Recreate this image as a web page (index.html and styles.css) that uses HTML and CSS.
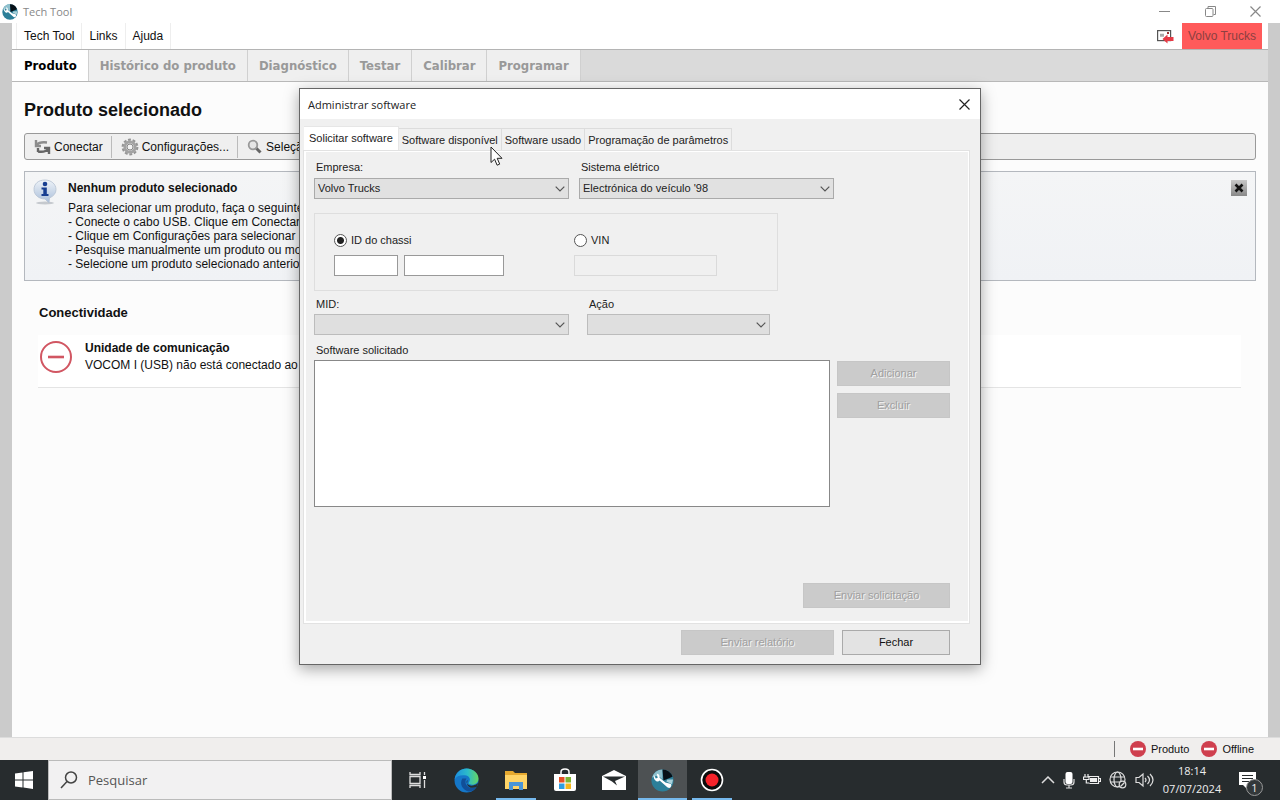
FILE: index.html
```html
<!DOCTYPE html>
<html lang="pt-BR">
<head>
<meta charset="utf-8">
<title>Tech Tool</title>
<link rel="stylesheet" href="styles.css">
</head>
<body>
<svg class="defs" aria-hidden="true">
  <symbol id="logo" viewBox="0 0 24 24">
    <circle cx="12" cy="12" r="11.5" fill="#2c7f99"/>
    <path d="M1 9A11.5 11.5 0 0 1 12 .5V11Q7 5 1 9Z" fill="#8fc0cd"/>
    <path d="M12 .5A11.5 11.5 0 0 1 22.5 8L13 12Z" fill="#071018"/>
    <path d="M3 6Q2 11 6 13q2 .5 3-1l8 7q3 2 4-1t-2-3l-4-1-6-5q0-4-3-4l1 4-2 1Z" fill="#fff"/>
    <path d="M17 11l6 0-1 5-6-3Z" fill="#a9d0d9"/>
  </symbol>
  <symbol id="chev" viewBox="0 0 10 6"><path d="M.7.7 5 5 9.3.7" fill="none" stroke="#555" stroke-width="1.2"/></symbol>
  <symbol id="cross" viewBox="0 0 11 11"><path d="M.5.5l10 10M10.500.500l-10 10" fill="none" stroke="currentColor" stroke-width="1.2"/></symbol>
  <symbol id="stop" viewBox="0 0 16 16"><circle cx="8" cy="8" r="8" fill="#cf3f4e"/><path d="M3 8h10" stroke="#fff" stroke-width="2.600"/></symbol>
</svg>

<header class="titlebar">
  <svg class="titlebar-logo"><use href="#logo"/></svg>
  <span class="titlebar-name">Tech Tool</span>
  <button class="win-btn" aria-label="Minimizar"><svg width="11" height="11"><path d="M0 5.500h11" stroke="#888"/></svg></button>
  <button class="win-btn" aria-label="Restaurar"><svg width="11" height="11" fill="none" stroke="#888"><rect x=".5" y="2.500" width="7.500" height="8" rx="1"/><path d="M3 2V.5h7.500v8H8.500"/></svg></button>
  <button class="win-btn" aria-label="Fechar janela"><svg width="11" height="11"><use href="#cross"/></svg></button>
</header>

<main class="app">
  <nav class="menu">
    <a href="#">Tech Tool</a><a href="#">Links</a><a href="#">Ajuda</a>
    <svg class="menu-mail" width="17" height="15" viewBox="0 0 17 15"><rect x=".6" y="1.600" width="13" height="10" fill="#fff" stroke="#555" stroke-width="1.200"/><path d="M3 5.500h4M3 7h4" stroke="#aaa" stroke-width="1.500"/><path d="M10 3h2v2h-2z" fill="#933"/><path d="M5.500 10 10.500 5.500v2.500h6v4h-6v2.500Z" fill="#e63a45"/></svg>
    <span class="brand">Volvo Trucks</span>
  </nav>
  <nav class="tabs">
    <a class="tab tab-on" href="#">Produto</a><a class="tab" href="#">Histórico do produto</a><a class="tab" href="#">Diagnóstico</a><a class="tab" href="#">Testar</a><a class="tab" href="#">Calibrar</a><a class="tab" href="#">Programar</a>
  </nav>
  <section class="content">
    <h1>Produto selecionado</h1>
    <div class="toolbar">
      <button><svg width="17" height="16" viewBox="0 0 17 16" fill="none" stroke-width="2.400"><path d="M2 1v6h5M2.500 6C5 3 9 3 13 3.500" stroke="#8c8c8c"/><path d="M10 9h5v6M14.500 10C12 13 8 13 4 12.500M4 9v4" stroke="#666"/></svg>Conectar</button>
      <button><svg width="18" height="18" viewBox="0 0 18 18"><circle cx="9" cy="9" r="7.300" fill="none" stroke="#959595" stroke-width="2.200" stroke-dasharray="2.900 1.700"/><circle cx="9" cy="9" r="5.200" fill="#ddd" stroke="#a2a2a2" stroke-width="2.800"/><circle cx="9" cy="9" r="3" fill="#f2f2f2" stroke="#888"/></svg>Configurações...</button>
      <button><svg width="16" height="16" viewBox="0 0 16 16"><path d="M8 8l5.500 5.500" stroke="#666" stroke-width="3"/><circle cx="6" cy="6" r="4.300" fill="#e6e6e6" stroke="#999" stroke-width="1.800"/></svg>Seleção</button>
    </div>
    <div class="notice">
      <svg class="notice-icon" width="24" height="26" viewBox="0 0 24 26"><defs><linearGradient id="bub" x2="0" y2="1"><stop stop-color="#eef3f8"/><stop offset="1" stop-color="#a8bdd9"/></linearGradient></defs><ellipse cx="12" cy="24" rx="9" ry="1.500" fill="#c5c9ce"/><path d="M12 1C5 1 1 5 1 10.500S6 20 12 20l4 4 .5-5Q23 16 23 10.500C23 5 18 1 12 1Z" fill="url(#bub)" stroke="#b5c2d2" stroke-width=".8"/><circle cx="12" cy="5" r="2.300" fill="#173e91"/><path d="M8.500 8.500h5.300v6.500h1.700v2h-7v-2h1.800v-4.500H8.500Z" fill="#173e91"/></svg>
      <div class="notice-text">
        <h2>Nenhum produto selecionado</h2>
        <p>Para selecionar um produto, faça o seguinte:</p>
        <p>- Conecte o cabo USB. Clique em Conectar</p>
        <p>- Clique em Configurações para selecionar um</p>
        <p>- Pesquise manualmente um produto ou modelo</p>
        <p>- Selecione um produto selecionado anterior</p>
      </div>
      <button class="notice-close" aria-label="Fechar aviso"><svg width="10" height="10"><path d="M1.500 1.500l7 7M8.500 1.500l-7 7" stroke="#111" stroke-width="2.600"/></svg></button>
    </div>
    <h2 class="conn-title">Conectividade</h2>
    <div class="conn">
      <svg width="34" height="34" viewBox="0 0 34 34" fill="#fff" stroke="#d15662"><circle cx="17" cy="17" r="15" stroke-width="2"/><path d="M9 17h16" stroke-width="2.600"/></svg>
      <div><h3>Unidade de comunicação</h3><p>VOCOM I (USB) não está conectado ao</p></div>
    </div>
  </section>
</main>

<footer class="status">
  <span class="status-item"><svg><use href="#stop"/></svg>Produto</span>
  <span class="status-item"><svg><use href="#stop"/></svg>Offline</span>
</footer>

<div class="taskbar">
  <button class="task task-start" aria-label="Iniciar"><svg width="18" height="18" viewBox="0 0 18 18" fill="#fff"><path d="M0 2.500 7.500 1.400v7H0ZM8.500 1.300 18 0v8.400H8.500ZM0 9.400h7.500v7.100L0 15.500ZM8.500 9.400H18V18l-9.500-1.400Z"/></svg></button>
  <label class="search"><svg width="18" height="18" viewBox="0 0 18 18" fill="none" stroke="#444" stroke-width="1.500"><circle cx="11" cy="6.500" r="5.500"/><path d="M7 10.500 1 17"/></svg><input type="text" placeholder="Pesquisar" aria-label="Pesquisar"></label>
  <button class="task" aria-label="Visão de tarefas"><svg width="18" height="16" viewBox="0 0 18 16" fill="none" stroke="#ddd" stroke-width="1.300"><path d="M1 0v2.500h10V0M1 16v-2.500h10V16M1 4.500h10v7H1ZM15.500 0v3M15.500 8v8"/><path d="M14 4h3v3h-3z" fill="#fff" stroke="none"/></svg></button>
  <button class="task" aria-label="Edge"><svg width="25" height="25" viewBox="0 0 24 24"><defs><linearGradient id="eg"><stop stop-color="#1c8ee0"/><stop offset=".55" stop-color="#2cbcc9"/><stop offset="1" stop-color="#66d562"/></linearGradient></defs><circle cx="12" cy="12" r="11.500" fill="#1577c8"/><path d="M.6 11C1.500 4 7 .5 12 .5c7 0 11.500 5 11.500 9.500 0 4-3 6-6 6-3.500 0-4-1.500-3-2.500 2-3 0-6-4-6.500C6 6.500 2 8 .6 11Z" fill="url(#eg)"/><path d="M8 10c-3 5 0 11 6 12.500 3 .4 6-1.500 7.500-4.500-3 2-7 1.500-9-1-2-2-2-5-.5-7Z" fill="#114f98"/><path d="M13 11.500c-2 2-.5 5 4 5.500 3 0 5-1.500 6.500-3l-1.500 4c-4 2-9 1-9.500-3Z" fill="#272c2e"/></svg></button>
  <button class="task task-run" aria-label="Explorador de arquivos"><svg width="24" height="20" viewBox="0 0 24 20"><path d="M1 1h8l2 2h12v16H1Z" fill="#e6a92f"/><path d="M1 5h22v14H1Z" fill="#ffd467"/><path d="M5 12h14v8h-4v-4H9v4H5Z" fill="#4a95d6"/></svg></button>
  <button class="task" aria-label="Store"><svg width="24" height="24" viewBox="0 0 24 24"><path d="M8 7V4q0-3 4-3t4 3v3" fill="none" stroke="#fff" stroke-width="1.500"/><path d="M1 6h22v15q0 2-2 2H3q-2 0-2-2Z" fill="#fff"/><path d="M6 9h5.500v5.500H6z" fill="#e74f25"/><path d="M12.500 9H18v5.500h-5.500z" fill="#7db432"/><path d="M6 15.500h5.500V21H6z" fill="#2e9de0"/><path d="M12.500 15.500H18V21h-5.500z" fill="#f5b61c"/></svg></button>
  <button class="task" aria-label="Email"><svg width="26" height="20" viewBox="0 0 26 20"><path d="M1 6 13 0l12 6v14H1Z" fill="#fff"/><path d="M2 6.500h22L14 11l2 4.500-5-4Z" fill="#272c2e"/></svg></button>
  <button class="task task-on" aria-label="Tech Tool"><svg width="23" height="23"><use href="#logo"/></svg></button>
  <button class="task task-run" aria-label="Gravador"><svg width="24" height="24" viewBox="0 0 24 24"><circle cx="12" cy="12" r="10.500" fill="#0b0b0c" stroke="#fff" stroke-width="1.600"/><circle cx="12" cy="12" r="6.500" fill="#f5222a"/></svg></button>
  <div class="tray">
    <svg width="14" height="8" viewBox="0 0 14 8" fill="none" stroke="#ddd" stroke-width="1.500"><path d="M1 7l6-6 6 6"/></svg>
    <svg width="12" height="18" viewBox="0 0 12 18"><rect x="2.500" y="1" width="7" height="12" rx="2" fill="#fff"/><path d="M1 8v3q0 3 3 3h4q3 0 3-3V8M6 14v3M3 17h6" fill="none" stroke="#ddd" stroke-width="1.200"/></svg>
    <svg width="18" height="14" viewBox="0 0 18 14"><path d="M5.500 3.500h10v7h-9M16 5.500h1.500v3H16M2 1v3M5 1v3M.5 4h5.500v2.500H.5ZM3.300 7v3h3" fill="none" stroke="#eee" stroke-width="1.200"/><path d="M7 5h7v4H7z" fill="#eee"/></svg>
    <svg width="18" height="18" viewBox="0 0 18 18" fill="none" stroke="#ddd" stroke-width="1.200"><circle cx="8.500" cy="8.500" r="7.500"/><ellipse cx="8.500" cy="8.500" rx="3.500" ry="7.500"/><path d="M1.500 6h14M1.500 11h14"/><circle cx="13.500" cy="13.500" r="3.300" fill="#272c2e"/><path d="M11.500 15.500l4-4"/></svg>
    <svg width="19" height="16" viewBox="0 0 19 16" fill="none" stroke="#ddd" stroke-width="1.200"><path d="M1 5.500h3L8 2v12l-4-3.500H1ZM10 6q2 2 0 4M12.500 4q4 4 0 8M15 2q6 6 0 12"/></svg>
  </div>
  <div class="clock"><span>18:14</span><span>07/07/2024</span></div>
  <button class="bell" aria-label="Notificações"><svg width="17" height="17" viewBox="0 0 17 17"><path d="M0 0h17v13H8v4l-4-4H0Z" fill="#fff"/><path d="M3 3.500h11M3 6.500h11M3 9.500h7" stroke="#272c2e" stroke-width="1.200"/></svg><span class="badge">1</span></button>
</div>

<div class="dialog" role="dialog" aria-labelledby="dlg-title">
  <div class="dlg-head"><span id="dlg-title">Administrar software</span><button class="dlg-x" aria-label="Fechar diálogo"><svg width="11" height="11"><use href="#cross"/></svg></button></div>
  <div class="dlg-tabs"><button class="on">Solicitar software</button><button>Software disponível</button><button>Software usado</button><button>Programação de parâmetros</button></div>
  <form class="panel">
    <div class="row row-first">
      <div class="field w-l"><label for="emp">Empresa:</label><span class="pick"><select id="emp"><option>Volvo Trucks</option></select><svg><use href="#chev"/></svg></span></div>
      <div class="field w-l"><label for="sis">Sistema elétrico</label><span class="pick"><select id="sis"><option>Electrónica do veículo '98</option></select><svg><use href="#chev"/></svg></span></div>
    </div>
    <div class="group">
      <div class="choice"><label><input type="radio" name="id" checked>ID do chassi</label><div class="boxes"><input class="box box-s" type="text" aria-label="Série do chassi"><input class="box box-m" type="text" aria-label="Número do chassi"></div></div>
      <div class="choice"><label><input type="radio" name="id">VIN</label><div class="boxes"><input class="box box-l" type="text" aria-label="Número VIN" disabled></div></div>
    </div>
    <div class="row row-wide">
      <div class="field w-l"><label for="mid">MID:</label><span class="pick"><select id="mid" disabled><option></option></select><svg><use href="#chev"/></svg></span></div>
      <div class="field w-s"><label for="act">Ação</label><span class="pick"><select id="act" disabled><option></option></select><svg><use href="#chev"/></svg></span></div>
    </div>
    <label class="list-label" for="req">Software solicitado</label>
    <div class="list-row">
      <textarea id="req"></textarea>
      <div class="list-btns"><button type="button" class="btn" disabled>Adicionar</button><button type="button" class="btn" disabled>Excluir</button></div>
    </div>
    <button type="button" class="btn btn-send" disabled>Enviar solicitação</button>
  </form>
  <div class="dlg-foot"><button class="btn btn-report" disabled>Enviar relatório</button><button class="btn btn-close">Fechar</button></div>
</div>

<svg class="cursor" width="13" height="21" viewBox="0 0 13 21"><path d="M1 1v15.500l3.600-3.300 2.500 6 2.600-1.100-2.500-5.800H12Z" fill="#fff" stroke="#222"/></svg>
</body>
</html>
```
FILE: styles.css
```css
* { box-sizing: border-box; }
body {
  margin: 0;
  height: 100vh;
  display: flex;
  flex-direction: column;
  position: relative;
  overflow: hidden;
  font: 12px/14px "Liberation Sans", Arial, sans-serif;
  color: #111;
  background: #fff;
}
h1, h2, h3, p { margin: 0; font-size: inherit; }
a { color: inherit; text-decoration: none; }
button { font: inherit; color: inherit; border: 0; background: none; padding: 0; }
svg { flex: none; display: block; }
.defs { position: absolute; width: 0; height: 0; }

.titlebar { display: flex; align-items: center; height: 23px; flex: none; padding-left: 2px; color: #888; }
.titlebar-logo { width: 16px; height: 16px; }
.titlebar-name { flex: 1; padding-left: 5px; font-family: "Open Sans", sans-serif; font-size: 11px; }
.win-btn { width: 46px; display: flex; justify-content: center; }
.win-btn:last-child { width: 44px; margin-right: 3px; }

.app { flex: 1; min-height: 0; display: flex; flex-direction: column; border: solid #cbcbcb; border-width: 0 12px; }
.menu { display: flex; align-items: center; height: 27px; flex: none; padding: 0 6px 0 4px; border-bottom: 1px solid #b4b4b4; }
.menu a { padding: 6px 7px; border-right: 1px solid #eee; }
.menu a:first-child { border-left: 1px solid #eee; }
.menu-mail { margin-left: auto; margin-right: 8px; }
.brand { align-self: stretch; padding: 6px; background: #ff5a5a; color: #8c4040; }
.tabs { display: flex; flex: none; height: 32px; background: #dadada; border-bottom: 1px solid #b8b8b8; font: bold 13px/32px "DejaVu Sans Condensed", "DejaVu Sans", sans-serif; }
.tab { padding: 0 11px; background: #efefef; color: #999; border-right: 1px solid #d0d0d0; }
.tab-on { padding-left: 12px; background: #fff; color: #000; }
.content { flex: 1; padding: 17px 12px 0; background: #fcfcfc; }
.content h1 { font-size: 18px; line-height: 22px; }
.toolbar { display: flex; align-items: center; height: 27px; margin-top: 12px; background: #efefef; border: 1px solid #999; border-radius: 3px; }
.toolbar button { display: flex; align-items: center; gap: 3px; height: 22px; padding: 0 8px 0 9px; border-right: 1px solid #bbb; }
.toolbar button:last-child { border: 0; }
.notice { display: flex; align-items: flex-start; margin-top: 11px; height: 110px; padding: 7px 8px; background: linear-gradient(#f4f5f6, #f0f2f5); border: 1px solid #b4b8be; }
.notice-text { flex: 1; padding: 2px 0 0 11px; }
.notice-text h2 { margin-bottom: 6px; }
.notice-close { width: 16px; height: 16px; margin-top: 1px; display: flex; align-items: center; justify-content: center; background: linear-gradient(#c8c8c8, #888); }
.conn-title { margin: 25px 0 0 15px; font-size: 13px; }
.conn { display: flex; gap: 12px; margin: 15px 15px 0 14px; padding: 5px 1px 13px; background: #fff; border-bottom: 1px solid #e4e4e4; height: 53px; }
.conn div { line-height: 17px; }

.status { display: flex; align-items: center; justify-content: flex-end; gap: 12px; height: 23px; flex: none; padding-right: 26px; background: #f0eeed; border-top: 1px solid #dcdcdc; font-size: 11px; }
.status-item { display: flex; align-items: center; gap: 5px; }
.status-item:first-child { padding-left: 15px; border-left: 1px solid #777; }
.status svg { width: 16px; height: 16px; }

.taskbar { display: flex; align-items: center; height: 40px; flex: none; background: #272c2e; font-family: "Open Sans", "Noto Sans", sans-serif; color: #eee; }
.task { width: 49px; height: 40px; display: flex; align-items: center; justify-content: center; }
.task-start { width: 48px; }
.search { flex: 0 1 344px; height: 40px; display: flex; align-items: center; gap: 10px; margin-right: 1px; padding-left: 11px; background: #f2f1f2; border: 1px solid #bbb; }
.search input { flex: 1; min-width: 0; border: 0; padding: 0; background: none; font: 13px/20px "Open Sans", sans-serif; }
.search input::placeholder { color: #555; opacity: 1; }
.task-on { background: #4d5153; box-shadow: inset 0 -2px #76b9ed; }
.task-run { background: linear-gradient(#76b9ed, #76b9ed) bottom / 40px 2px no-repeat; }
.tray { display: flex; align-items: center; gap: 8px; margin-left: auto; }
.clock { display: flex; flex-direction: column; align-items: center; width: 76px; font-size: 11px; line-height: 18px; }
.bell { position: relative; margin: 0 24px 0 9px; }
.badge { position: absolute; left: 7px; top: 7px; width: 17px; height: 17px; border: 1px solid #999; border-radius: 50%; background: #33383a; font-size: 11px; line-height: 15px; text-align: center; }

.dialog { position: absolute; top: 88px; left: 50%; margin-left: -341px; width: 682px; display: flex; flex-direction: column; background: #f0f0f0; border: 1px solid #666; box-shadow: 0 4px 14px rgba(0, 0, 0, .35); font-size: 11px; line-height: 13px; color: #222; }
.dlg-head { display: flex; justify-content: space-between; align-items: center; height: 30px; padding: 0 10px 0 8px; background: #fff; font-family: "Open Sans", sans-serif; }
.dlg-tabs { display: flex; align-items: flex-end; padding: 7px 4px 0; }
.dlg-tabs button { height: 23px; padding: 1px 3px 0; border: solid #dcdcdc; border-width: 1px 1px 0 0; }
.dlg-tabs .on { height: 25px; padding: 0 5px 1px; background: #fff; border-color: #e6e6e6; }
.panel { display: flex; flex-direction: column; margin: 0 11px 0 4px; padding: 9px 18px 13px 8px; border: solid #fff; border-width: 1px 1px 2px 2px; box-shadow: 0 0 0 1px #e2e2e2; }
.row { display: flex; gap: 10px; }
.row-wide { gap: 18px; margin-top: 7px; }
.field { display: flex; flex-direction: column; gap: 4px; }
.field label, .list-label { padding-left: 2px; }
.w-l { width: 255px; }
.w-s { width: 183px; }
.row-wide .field { gap: 3px; }
.pick { position: relative; display: flex; }
.pick select { appearance: none; width: 100%; height: 21px; padding: 0 3px; background: #e1e1e1; border: 1px solid #aaa; border-radius: 0; font: inherit; color: #222; opacity: 1; }
.pick select:disabled { border-color: #bcbcbc; background: #dfdfdf; }
.pick svg { position: absolute; right: 4px; top: 8px; width: 10px; height: 6px; pointer-events: none; }
.group { display: flex; width: 464px; height: 78px; margin-top: 14px; padding: 19px 19px 0; border: 1px solid #dedede; }
.choice { width: 240px; flex: none; display: flex; flex-direction: column; gap: 7px; }
.choice label { display: flex; align-items: center; gap: 4px; height: 15px; }
.choice input[type="radio"] { appearance: none; width: 13px; height: 13px; margin: 0; border: 1px solid #555; border-radius: 50%; background: #fff; }
.choice input[type="radio"]:checked { background: radial-gradient(circle, #222 3px, #fff 4px); }
.boxes { display: flex; gap: 6px; }
.box { height: 21px; padding: 2px; border: 1px solid #999; background: #fff; font: inherit; }
.box:disabled { background: #f0f0f0; border-color: #dadada; }
.box-s { width: 64px; }
.box-m { width: 100px; }
.box-l { width: 143px; }
.list-label { margin: 9px 0 3px; }
.list-row { display: flex; gap: 7px; }
textarea { flex: 1; height: 147px; resize: none; border: 1px solid #888; background: #fff; margin: 0; font: inherit; }
.list-btns { width: 113px; display: flex; flex-direction: column; gap: 7px; padding-top: 1px; }
.btn { height: 25px; background: #e3e3e3; border: 1px solid #aaa; color: #111; }
.btn:disabled { background: #cbcbcb; border-color: #c6c6c6; color: #a0a0a0; text-shadow: 1px 1px #f4f4f4; }
.btn-send { align-self: flex-end; width: 147px; margin-top: 76px; }
.dlg-foot { display: flex; justify-content: flex-end; gap: 8px; padding: 7px 30px 9px; }
.btn-report { width: 153px; }
.btn-close { width: 108px; }
.cursor { position: absolute; left: 490px; top: 146px; }
```
